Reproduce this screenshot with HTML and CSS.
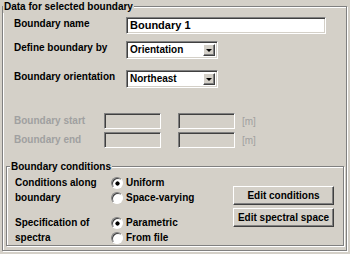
FILE: index.html
```html
<!DOCTYPE html>
<html lang="en">
<head>
    <meta charset="UTF-8">
    <title>Data for selected boundary</title>
    <link rel="stylesheet" href="styles.css">
</head>
<body>
    <fieldset class="group outer">
        <legend>Data for selected boundary</legend>
        <div class="form">
            <label class="lbl">Boundary name</label>
            <div class="field name-field">Boundary 1</div>

            <label class="lbl">Define boundary by</label>
            <div class="combo"><span class="combo-text">Orientation</span><span class="combo-btn"></span></div>

            <label class="lbl">Boundary orientation</label>
            <div class="combo"><span class="combo-text">Northeast</span><span class="combo-btn"></span></div>
        </div>

        <div class="range">
            <div class="range-row">
                <span class="lbl disabled">Boundary start</span>
                <span class="field small"></span>
                <span class="field small second"></span>
                <span class="unit">[m]</span>
            </div>
            <div class="range-row">
                <span class="lbl disabled">Boundary end</span>
                <span class="field small"></span>
                <span class="field small second"></span>
                <span class="unit">[m]</span>
            </div>
        </div>

        <fieldset class="group inner">
            <legend>Boundary conditions</legend>
            <div class="cond">
                <div class="cond-left">
                    <div class="opt-row">
                        <div class="opt-lbl">Conditions along<br>boundary</div>
                        <div class="radios">
                            <div class="radio on">Uniform</div>
                            <div class="radio">Space-varying</div>
                        </div>
                    </div>
                    <div class="opt-row">
                        <div class="opt-lbl">Specification of<br>spectra</div>
                        <div class="radios">
                            <div class="radio on">Parametric</div>
                            <div class="radio">From file</div>
                        </div>
                    </div>
                </div>
                <div class="cond-right">
                    <button class="btn">Edit conditions</button>
                    <button class="btn">Edit spectral space</button>
                </div>
            </div>
        </fieldset>
    </fieldset>
</body>
</html>
```

FILE: styles.css
```css
body {
    background: #d4d0c8;
    color: #000000;
    font-family: 'Liberation Sans', Arial, sans-serif;
    font-size: 10px;
    font-weight: 700;
    margin: 0;
    padding: 0 3px 0 2px;
    width: 350px;
    height: 254px;
    overflow: hidden;
    box-sizing: border-box;
}
/* Etched group box */
.group {
    margin: 0;
    padding: 0;
    border: 1px solid #808080;
    box-shadow: inset 1px 1px 0 #ffffff, 1px 1px 0 #ffffff;
    min-width: 0;
}
.group legend {
    padding: 0 1px;
    margin-left: 0;
    background: #d4d0c8;
    font-size: 10px;
    line-height: 13px;
}
.outer {
    padding-bottom: 4px;
}
.form {
    display: grid;
    grid-template-columns: 112px auto;
    grid-template-rows: 24px 29px 18px;
    padding: 4px 0 0 11px;
    align-items: start;
}
.lbl {
    line-height: 12px;
}
.form .lbl {
    padding-top: 1px;
}
.field {
    background: #ffffff;
    box-sizing: border-box;
    border: 1px solid;
    border-color: #808080 #ffffff #ffffff #808080;
    box-shadow: inset 1px 1px 0 #404040, inset -1px -1px 0 #d4d0c8;
    height: 17px;
    line-height: 15px;
    padding: 0 3px;
}
.name-field {
    width: 200px;
    font-size: 11px;
}
.combo {
    display: flex;
    width: 92px;
    height: 18px;
    box-sizing: border-box;
    background: #ffffff;
    border: 1px solid;
    border-color: #808080 #ffffff #ffffff #808080;
    box-shadow: inset 1px 1px 0 #404040, inset -1px -1px 0 #d4d0c8;
    padding: 2px;
}
.combo-text {
    flex: 1;
    line-height: 12px;
    padding-left: 1px;
}
.combo-btn {
    width: 12px;
    background: #d4d0c8;
    box-sizing: border-box;
    border: 1px solid;
    border-color: #ffffff #404040 #404040 #ffffff;
    box-shadow: inset -1px -1px 0 #808080;
    display: flex;
    align-items: center;
    justify-content: center;
}
.combo-btn::after {
    content: '';
    border-left: 3px solid transparent;
    border-right: 3px solid transparent;
    border-top: 3px solid #000000;
}
.range {
    padding: 25px 0 0 11px;
    display: flex;
    flex-direction: column;
    gap: 3px;
}
.range-row {
    display: flex;
    align-items: center;
}
.range-row .lbl {
    width: 90px;
}
.disabled {
    color: #a0a0a0;
}
.field.small {
    width: 57px;
    height: 16px;
    background: #d4d0c8;
}
.field.second {
    margin-left: 17px;
}
.unit {
    margin-left: 7px;
    color: #a0a0a0;
    font-weight: 400;
}
.inner {
    margin: 12px 2px 0 3px;
    padding-bottom: 0;
}
.inner legend {
    margin-left: 3px;
}
.cond {
    display: flex;
    padding: 2px 0 0 8px;
}
.cond-left {
    flex: 1;
    display: flex;
    flex-direction: column;
    gap: 10px;
}
.opt-row {
    display: flex;
}
.opt-lbl {
    width: 96px;
    line-height: 15px;
}
.radios {
    display: flex;
    flex-direction: column;
}
.radio {
    line-height: 15px;
    display: flex;
    align-items: center;
}
.radio::before {
    content: '';
    width: 10px;
    height: 10px;
    margin-right: 3px;
    border-radius: 50%;
    border: 1px solid;
    border-color: #808080 #ffffff #ffffff #808080;
    box-shadow: inset 1px 1px 0 #404040;
    background: #ffffff;
}
.radio.on::before {
    background: radial-gradient(circle at 55% 55%, #000000 0 1.8px, #ffffff 2.4px);
}
.cond-right {
    display: flex;
    flex-direction: column;
    gap: 3px;
    padding: 11px 9px 0 0;
}
.btn {
    width: 101px;
    height: 19px;
    padding: 0;
    font-family: 'Liberation Sans', Arial, sans-serif;
    font-size: 10px;
    font-weight: 700;
    color: #000000;
    background: #d4d0c8;
    border: 1px solid;
    border-color: #ffffff #404040 #404040 #ffffff;
    box-shadow: inset -1px -1px 0 #808080;
}
```
